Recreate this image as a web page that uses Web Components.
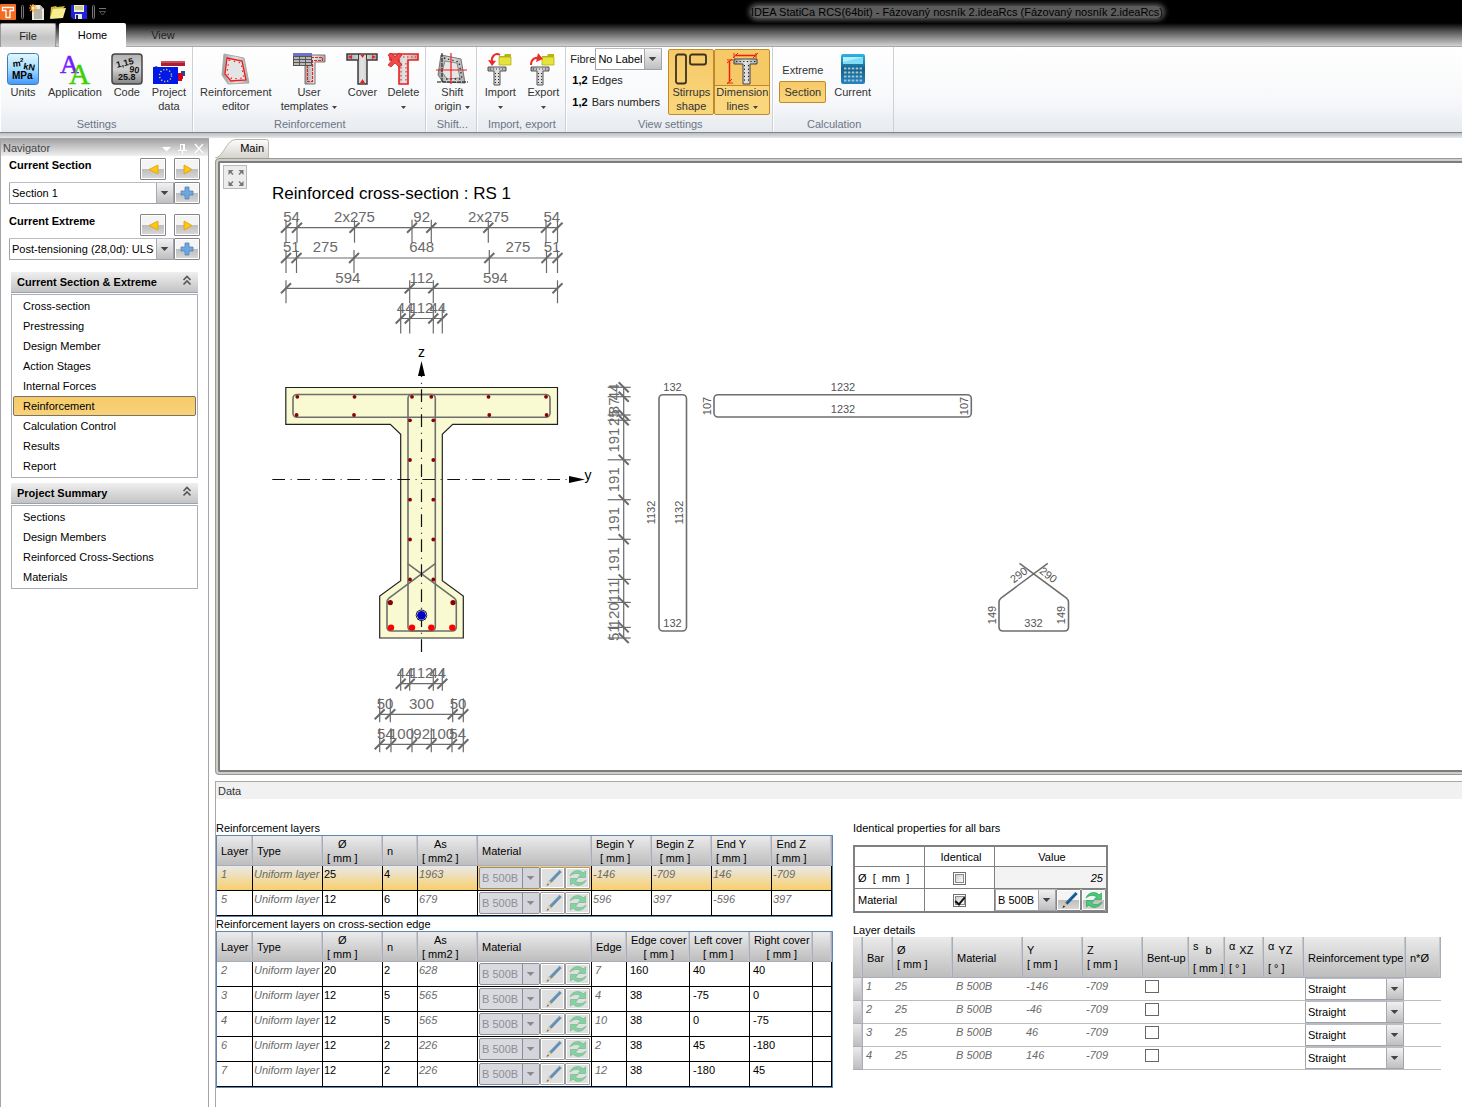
<!DOCTYPE html>
<html lang="en">
<head>
<meta charset="utf-8">
<title>IDEA StatiCa RCS</title>
<style>
  html, body { margin: 0; height: 100%; }
  body { font: 11px/14px "Liberation Sans", Arial, sans-serif; color: #000; background: #fff; overflow-x: hidden; }
</style>
</head>
<body>
<rcs-app></rcs-app>

<script>
/* ---------- shared helpers ---------- */
const define = (name, css, html, setup) => customElements.define(name, class extends HTMLElement {
  connectedCallback() {
    if (this.shadowRoot) return;
    const root = this.attachShadow({ mode: 'open' });
    root.innerHTML = `<style>*{box-sizing:border-box}${css}</style>${typeof html === 'function' ? html(this) : html}`;
    if (setup) setup(this, root);
  }
});

const comboCss = `
  .combo { display: grid; grid-template-columns: 1fr 17px; height: 22px; border: 1px solid #9ea3ad; border-top-color: #b9bcc2; border-radius: 1px; background: #fff; }
  .combo select { grid-area: 1 / 1 / 2 / 3; appearance: none; min-width: 0; width: 100%; height: 20px; margin: 0; padding: 0 19px 0 2px; border: 0; border-radius: 0; background: none; font: inherit; color: #000; opacity: 1; outline: 0; }
  .combo svg { grid-area: 1 / 2; width: 17px; height: 20px; background: linear-gradient(#f1f1f1, #bfbfbf); border-left: 1px solid #a5a9b1; pointer-events: none; }
  .combo.off { background: #d9d9e0; border-color: #8e8e92; border-radius: 2px; }
  .combo.off select { color: #8e8e96; }
  .combo.off svg { background: #d4d4dc; border-color: #8e8e92; }
`;
const comboHtml = (value, attrs = '', off = false) => `
  <span class="combo${off ? ' off' : ''}"><select ${attrs} ${off ? 'disabled' : ''}><option>${value}</option></select>
  <svg viewBox="0 0 17 20" aria-hidden="true"><path d="M4 8h8l-4 4z" fill="${off ? '#8a8a8e' : '#444'}"/></svg></span>`;

/* ---------- icon set ---------- */
const tee = `<linearGradient id="m" x1="0" x2="1"><stop offset="0" stop-color="#9a9a9a"/><stop offset=".5" stop-color="#e4e4e4"/><stop offset="1" stop-color="#a8a8a8"/></linearGradient>`;
const folder = `<path d="M12 3h5l1-2h6v10H12z" fill="#b9b414"/><path d="M12 4h12v8H12z" fill="#e6e33a" stroke="#b4ae1c" stroke-width=".8"/>`;
const ioTee = `<path d="M1 14h18v4h-6v14H7V18H1z" fill="url(#m)" stroke="#555"/><path d="M3 16h14M8.500 20v10M11.500 20v10" stroke="#333" stroke-dasharray="1 2"/>`;
const icons = {
  logo: [16, 16, `<rect width="16" height="16" rx="1" fill="#f26c22"/><path d="M2.500 3.500h11v3H10v7H6v-7H2.500z" fill="none" stroke="#fff" stroke-width="1.300"/>`],
  newdoc: [16, 16, `<path d="M3 1h8l4 4v11H3z" fill="#ece9df"/><path d="M5 6h8M5 8h8M5 10h8M5 12h8M5 14h8" stroke="#77736a" stroke-width=".9"/><path d="M11 1v4h4z" fill="#bbb"/><path d="M4 0v8M0 4h8M1 1l6 6M7 1L1 7" stroke="#ff9d2c" stroke-width="1.200"/><circle cx="4" cy="4" r="1.500" fill="#fff3b0"/>`],
  open: [16, 16, `<path d="M1 3l5-1 1 1 8-1-3 4L3 14H0z" fill="#c9b93c"/><path d="M3 5l13-1-3 10-13 1z" fill="#f7ee92"/>`],
  save: [16, 16, `<path d="M0 1h16v14H2l-2-2z" fill="#1e22e0"/><path d="M3 1h10v7H3z" fill="#eff0c0"/><path d="M4 3h8M4 5h8" stroke="#a3a67a"/><path d="M4 10h7v5H4z" fill="#e8e8e8"/><path d="M5 11h2v4H5z" fill="#1b1b60"/>`],
  units: [32, 32, `<linearGradient id="u" x2="0" y2="1"><stop offset="0" stop-color="#e2f8ff"/><stop offset=".5" stop-color="#a6dcff"/><stop offset="1" stop-color="#3f97ff"/></linearGradient><rect x=".5" y=".5" width="31" height="31" rx="3" fill="url(#u)" stroke="#3f7cae"/><g font-family="Liberation Sans" font-weight="700" fill="#000"><text x="6" y="14" font-size="9" transform="rotate(-6 6 14)">m</text><text x="13" y="9" font-size="6">2</text><text x="16" y="16" font-size="9" transform="rotate(10 16 16)">kN</text><text x="5" y="26" font-size="10">MPa</text></g>`],
  app: [32, 32, `<g font-family="Liberation Serif"><text x="1" y="20" font-size="26" fill="#7320ff" stroke="#7320ff" stroke-width=".5">A</text><text x="10" y="31" font-size="29" fill="#3fd000" stroke="#3fd000" stroke-width=".5">A</text></g>`],
  code: [32, 32, `<linearGradient id="c" x2="0" y2="1"><stop offset="0" stop-color="#b2b2b2"/><stop offset=".5" stop-color="#d0d0d0"/><stop offset="1" stop-color="#858585"/></linearGradient><rect x="1" y="1" width="30" height="30" rx="3" fill="url(#c)" stroke="#444" stroke-width="1.500"/><g font-family="Liberation Sans" font-weight="700" fill="#111"><text x="6" y="15" font-size="9" transform="rotate(-14 6 15)">1,15</text><text x="18" y="19" font-size="9" transform="rotate(8 18 19)">90</text><text x="7" y="27" font-size="9">25.8</text></g>`],
  project: [32, 32, `<path d="M8 8h24v5H8z" fill="#b01e2c"/><path d="M8 8h24v2H8z" fill="#c8505c"/><path d="M20 13h12v3H20z" fill="#fff"/><path d="M28 18h4v5h-4z" fill="#234a90"/><path d="M25 20h4v8h-4zM27 22h3v4h-3z" fill="#d8001c"/><path d="M0 15l3-2 4 2z" fill="#1f3d86"/><path d="M0 14h25v17H0z" fill="#0019e8"/><circle cx="12.500" cy="22.500" r="6" fill="none" stroke="#e2df5c" stroke-width="1.400" stroke-dasharray="1.200 1.940"/>`],
  editor: [32, 32, `${tee}<path d="M4 1l20 4 5 25-21 1-6-9z" fill="url(#m)" stroke="#aaa"/><path d="M7 5l15 3 4 19-15 1-6-7z" fill="#e4e4e4" stroke="#ee1c1c" stroke-width="1.300"/><path d="M9 7l12 3 3 15-12 1-5-6z" fill="none" stroke="#ee1c1c" stroke-width="1.300" stroke-dasharray="1.300 3.700"/>`],
  templates: [32, 32, `${tee}<path d="M11 2h21v7H22v22h-10V9h-1z" fill="url(#m)" stroke="#777"/><path d="M14.500 12v16.500h5V7.500h10v-3h-12" fill="none" stroke="#ee1c1c" stroke-width="1.100" stroke-dasharray="3 1"/><path d="M0 0h19v13H0z" fill="#b9b9b9"/><path d="M0 0h19v3H0z" fill="#6f73c8"/><path d="M.5 3.500h18M.5 6.500h18M.5 9.500h18M.5 12.500h18M.5 3v10M6.500 3v10M12.500 3v10M18.500 3v10" stroke="#555" fill="none"/>`],
  cover: [32, 32, `${tee}<path d="M1 1h30v6H21v24H12V7H1z" fill="url(#m)" stroke="#3c3c3c" stroke-width="1.500"/><path d="M12.500 1v6M20.500 1v6" stroke="#3c3c3c"/><path d="M2 4l4-2v4zM30 4l-4-2v4zM16.500 5l-2-3h4zM16.500 26l-2.500 4h5z" fill="#ee1c1c"/>`],
  delete: [32, 32, `${tee}<path d="M3 1h28v6H21v24H12V7H3z" fill="url(#m)" stroke="#ee1c1c" stroke-width="1.600"/><path d="M14 10v19M19 10v19M16 4h13" stroke="#ee1c1c" stroke-dasharray="1.500 2.500"/><path d="M1 2l3-2 4 4 4-4 3 2-4 5 4 5-3 2-4-4-4 4-3-2 4-5z" fill="#ee4848" stroke="#c41f1f" stroke-width=".7"/>`],
  shift: [32, 32, `${tee}<path d="M5 2l20 4 4 24-22-1-5-7z" fill="url(#m)" stroke="#777"/><path d="M9 8l12 2 3 15-13 1-5-7z" fill="#e6e6e6" stroke="#888"/><path d="M6 0v30M1 29h31" stroke="#111" stroke-dasharray="4 1"/><path d="M8 5l15 4 3 17-16 0" fill="none" stroke="#222" stroke-width="1.300" stroke-dasharray="1.300 3"/><path d="M15 0v31M0 17h31" stroke="#ee1c1c" stroke-width="1.200"/>`],
  import: [26, 32, `${tee}${ioTee}${folder}<path d="M13 2C8-1 4 4 5 9" fill="none" stroke="#ee2a2a" stroke-width="2"/><path d="M1 7l8 1-4 5z" fill="#ee2a2a"/>`],
  export: [26, 32, `${tee}${ioTee}${folder}<path d="M1 12C1 6 5 4 10 5" fill="none" stroke="#ee2a2a" stroke-width="2"/><path d="M8 0l5 6-7 3z" fill="#ee2a2a"/>`],
  stirrups: [32, 32, `<rect x="1" y="1.500" width="10" height="29" rx="2" fill="none" stroke="#3a3222" stroke-width="1.800"/><rect x="15" y="1.500" width="16" height="10" rx="2" fill="none" stroke="#3a3222" stroke-width="1.800"/>`],
  dimension: [32, 32, `${tee}<path d="M8 6h23v5h-7v20h-7V11H8z" fill="url(#m)" stroke="#444"/><path d="M10 8.500h20M18.500 12v17M22.500 12v17" stroke="#222" stroke-dasharray="1.300 2.300"/><path d="M9 2.500h21M3.500 8v21" stroke="#ee2010" stroke-width="1.500"/><path d="M7 5l5-5M27 5l5-5M1 10l5-4M1 31l5-5M8 0v5M30 0v5M1 7h6M1 30h6" stroke="#ee2010"/>`],
  calc: [26, 32, `<linearGradient id="k" x2="0" y2="1"><stop offset="0" stop-color="#2fb4e8"/><stop offset=".5" stop-color="#14628c"/><stop offset="1" stop-color="#2285c4"/></linearGradient><rect x="1" y="1" width="24" height="30" rx="2" fill="url(#k)"/><path d="M3 4h20v7H3z" fill="#7fdcf6"/><path d="M3 4h20l-20 5z" fill="#b4f0fc"/><path d="M4 15.500h18M4 19.500h18M4 23.500h18M4 27.500h18" stroke="#a8c4d2" stroke-width="2" stroke-dasharray="2.500 1.400"/>`],
  prev: [24, 20, `<path d="M17 6v9l-9-4.500z" fill="#ffc80a" stroke="#d99c10" stroke-width=".8"/>`],
  next: [24, 20, `<path d="M9 6v9l8-4.500z" fill="#ffc80a" stroke="#d99c10" stroke-width=".8"/>`],
  plus: [24, 20, `<path d="M10 4h4v4h4v4h-4v4h-4v-4H6V8h4z" fill="#6da7e0" stroke="#5a83b4" stroke-width=".8"/>`],
  pencil: [22, 20, `<path d="M18.500 3L8 14" stroke="#14568c" stroke-width="3.200"/><path d="M17.500 2.500L7.500 13" stroke="#3a8cc8" stroke-width="1"/><path d="M6.500 12l3.500 3-5.500 3z" fill="#e0c080"/><path d="M4.500 18l1-2.500 1.700 1.200z" fill="#222"/>`],
  refresh: [22, 20, `<path d="M3 8C5 2 13 1 16 5l2.500-2v6.500H11L13.500 7C11 4.500 6 5 3 8z" fill="#4cc878" stroke="#2aa45a" stroke-width=".7"/><path d="M19 12c-2 6-10 7-13 3l-2.500 2v-6.500H11L8.500 13c2.500 2.500 7.500 2 10.500-1z" fill="#4cc878" stroke="#2aa45a" stroke-width=".7"/>`],
  expand: [24, 24, `<g fill="#777" stroke="#777"><path d="M4.500 4h5l-5 5zM19.500 4v5l-5-5zM4.500 20v-5l5 5zM19.500 20h-5l5-5z" stroke="none"/><path d="M6 5.500l3 3M18 5.500l-3 3M6 18.500l3-3M18 18.500l-3-3" stroke-width="1.500"/></g>`],
  chevrons: [10, 11, `<path d="M1.500 5L5 1.500 8.500 5M1.500 9.500L5 6l3.500 3.500" fill="none" stroke="#555" stroke-width="1.600"/>`],
  pin: [9, 11, `<path d="M2.500 1v6M6.500 1v6M2 1.500h5M0 7.500h9M4.500 8v3M5.500 1v6" stroke="#fff" fill="none"/>`],
  close: [10, 11, `<path d="M1 1l8 9M9 1L1 10" stroke="#fff" stroke-width="1.300"/>`],
  menu: [9, 11, `<path d="M0 4h9L4.500 8.500z" fill="#fff"/>`],
  more: [7, 8, `<path d="M0 .5h7" stroke="#777"/><path d="M.5 3.500h6L3.500 7z" fill="none" stroke="#555"/>`],
  grip: [3, 14, `<rect x=".5" y=".5" width="2" height="13" rx="1" fill="#111" stroke="#777"/>`]
};
define('ui-icon', ':host{display:block;flex:none}svg{display:block;overflow:visible}', el => {
  const [w, h, body] = icons[el.getAttribute('name')];
  return `<svg width="${w}" height="${h}" viewBox="0 0 ${w} ${h}" aria-hidden="true">${body}</svg>`;
});

/* ---------- small controls ---------- */
define('ui-combo', `:host{display:block}label{display:flex;align-items:center}.combo{flex:1;min-width:0}${comboCss}`,
  el => `<label><slot></slot>${comboHtml(el.getAttribute('value'), `aria-label="${el.getAttribute('name')}"`, el.hasAttribute('disabled'))}</label>`);

define('tool-button', `
  :host { display: block; }
  button { display: flex; align-items: center; justify-content: center; width: 100%; height: 22px; padding: 0; border: 1px solid #85858a; border-radius: 1px; box-shadow: inset 0 0 0 1px #fff; background: linear-gradient(#f4f4f4 50%, #bdbdbd 50%, #d9d9d9); }
  :host([disabled]) button { background: #e0e0e0; border-color: #9c9c9c; }
  :host([disabled]) ui-icon { opacity: .6; }`,
  el => `<button type="button" aria-label="${el.getAttribute('label')}" ${el.hasAttribute('disabled') ? 'disabled' : ''}><ui-icon name="${el.getAttribute('icon')}"></ui-icon></button>`);

/* ---------- title bar and tabs ---------- */
define('title-bar', `
  :host { display: flex; align-items: center; height: 23px; background: #000; }
  .quick { display: flex; align-items: center; gap: 5px; }
  .title { flex: 1; padding-left: 346px; text-align: center; white-space: nowrap; color: #000; }
  .title span { border-radius: 6px; background: #5c5c5c; box-shadow: 0 0 5px 2px #5c5c5c; }
  ui-icon[name=more] { margin-left: -1px; }`,
  `<span class="quick"><ui-icon name="logo"></ui-icon><ui-icon name="grip"></ui-icon><ui-icon name="newdoc"></ui-icon><ui-icon name="open"></ui-icon><ui-icon name="save"></ui-icon><ui-icon name="grip"></ui-icon><ui-icon name="more"></ui-icon></span>
   <span class="title"><span><slot></slot></span></span>`);

define('ribbon-tabs', `
  :host { display: flex; height: 24px; gap: 3px; background: linear-gradient(#000, #555 35%, #cfcfcf 95%, #a9a9ad 96%); }
  button { border: 0; padding: 0; font: inherit; background: none; color: #222; }
  .file { width: 56px; border: 1px solid #999; border-bottom: 0; border-radius: 2px 2px 0 0; background: linear-gradient(#e9e9e9, #c3c3c3 60%, #d2d2d2); }
  .on { width: 67px; background: #fff; border-radius: 2px 2px 0 0; color: #000; }
  .view { width: 68px; }`,
  `<button type="button" class="file">File</button><button type="button" class="on">Home</button><button type="button" class="view">View</button>`);

/* ---------- ribbon ---------- */
define('ribbon-button', `
  :host { display: block; }
  button { display: flex; flex-direction: column; align-items: center; height: 66px; min-width: 40px; padding: 3px; border: 1px solid transparent; border-radius: 2px; background: none; font: inherit; color: #333; text-align: center; white-space: nowrap; }
  ui-icon { height: 32px; }
  svg { vertical-align: 1px; margin-left: 1px; }
  :host([pressed]) button { border-color: #c08a2c; background: linear-gradient(#f6c967, #fad77c); padding: 3px 1px; min-width: 46px; }
  :host([pressed][split]) button { background: linear-gradient(#f6c967 0 35px, #c08a2c 35px 36px, #fad77c 36px); }`,
  el => {
    const arrow = '<svg width="5" height="3" viewBox="0 0 5 3"><path d="M0 0h5L2.500 3z" fill="#444"/></svg>';
    const l2 = el.getAttribute('line2') || '';
    return `<button type="button"><ui-icon name="${el.getAttribute('icon')}"></ui-icon><span>${el.getAttribute('label')}</span><span>${l2}${el.hasAttribute('menu') ? ' ' + arrow : ''}</span></button>`;
  });

define('ribbon-group', `
  :host { display: flex; flex-direction: column; padding: 2px 2px 0 3px; border-right: 1px solid #cdd1d7; box-shadow: inset 1px 0 #fff; }
  :host([wide]) { padding-left: 4px; }
  .row { display: flex; height: 66px; }
  .name { padding-top: 2px; height: 17px; text-align: center; color: #6c7486; white-space: nowrap; }`,
  el => `<div class="row"><slot></slot></div><div class="name">${el.getAttribute('name')}</div>`,
  (el, root) => { root.querySelector('.row').style.gap = (el.getAttribute('gap') || 1) + 'px'; });

define('label-options', `
  :host { display: block; width: 98px; color: #222; }
  ui-combo { width: 92px; margin: -1px 0 3px; }
  button { display: flex; gap: 4px; align-items: center; height: 14px; margin: 0 0 8px; padding: 0 0 0 2px; border: 0; background: none; font: inherit; color: inherit; white-space: nowrap; }
  b { color: #000; }`,
  `<ui-combo name="Fibre label" value="No Label">Fibre</ui-combo><button type="button"><b>1,2</b> Edges</button><button type="button"><b>1,2</b> Bars numbers</button>`);

define('extreme-toggle', `
  :host { display: block; width: 47px; margin: 0 2px; padding-top: 10px; }
  button { display: block; width: 47px; height: 22px; padding: 0; border: 1px solid transparent; border-radius: 2px; background: none; font: inherit; color: #333; }
  .on { border-color: #c08a2c; background: linear-gradient(#f6c967, #fad77c); }`,
  `<button type="button">Extreme</button><button type="button" class="on" aria-pressed="true">Section</button>`);

define('app-ribbon', `
  :host { display: flex; height: 91px; padding-bottom: 6px; background: linear-gradient(#7f858a 0 1px, #b9bdc1 1px, #e6e8ea 6px) 0 100% / 100% 6px no-repeat, linear-gradient(#fff, #f7f8fa 60%, #e3e7ec); }`,
  `<ribbon-group name="Settings">
     <ribbon-button icon="units" label="Units"></ribbon-button>
     <ribbon-button icon="app" label="Application"></ribbon-button>
     <ribbon-button icon="code" label="Code"></ribbon-button>
     <ribbon-button icon="project" label="Project" line2="data"></ribbon-button>
   </ribbon-group>
   <ribbon-group name="Reinforcement">
     <ribbon-button icon="editor" label="Reinforcement" line2="editor"></ribbon-button>
     <ribbon-button icon="templates" label="User" line2="templates" menu></ribbon-button>
     <ribbon-button icon="cover" label="Cover"></ribbon-button>
     <ribbon-button icon="delete" label="Delete" menu></ribbon-button>
   </ribbon-group>
   <ribbon-group name="Shift..." wide><ribbon-button icon="shift" label="Shift" line2="origin" menu></ribbon-button></ribbon-group>
   <ribbon-group name="Import, export" gap="3">
     <ribbon-button icon="import" label="Import" menu></ribbon-button>
     <ribbon-button icon="export" label="Export" menu></ribbon-button>
   </ribbon-group>
   <ribbon-group name="View settings" gap="0" wide>
     <label-options></label-options>
     <ribbon-button icon="stirrups" label="Stirrups" line2="shape" pressed></ribbon-button>
     <ribbon-button icon="dimension" label="Dimension" line2="lines" menu pressed split></ribbon-button>
   </ribbon-group>
   <ribbon-group name="Calculation" gap="2" wide>
     <extreme-toggle></extreme-toggle>
     <ribbon-button icon="calc" label="Current"></ribbon-button>
     <span style="width:14px"></span>
   </ribbon-group>`);

/* ---------- navigator ---------- */
define('nav-picker', `
  :host { display: block; padding: 2px 8px 8px 8px; }
  .row { display: flex; align-items: flex-start; }
  .row + .row { margin-top: 2px; }
  label { flex: 1; font-weight: 700; line-height: 14px; }
  tool-button { width: 26px; }
  .gap { margin-left: 8px; }
  .combo { flex: 1; min-width: 0; }
  ${comboCss}`,
  el => `<div class="row"><label for="s">${el.getAttribute('name')}</label><tool-button icon="prev" label="Previous"></tool-button><tool-button class="gap" icon="next" label="Next"></tool-button></div>
         <div class="row">${comboHtml(el.getAttribute('value'), 'id="s"')}<tool-button icon="plus" label="Add"></tool-button></div>`);

define('nav-list', `
  :host { display: block; margin: 0 10px 5px 10px; }
  h2 { display: flex; align-items: center; justify-content: space-between; height: 21px; margin: 0 0 1px; padding: 0 6px 0 6px; font: inherit; font-weight: 700; border-bottom: 1px solid #9ba3b0; background: linear-gradient(#efefef, #c3c3c3); }
  h2 ui-icon { margin-top: -4px; }
  ul { margin: 0; padding: 1px; list-style: none; border: 1px solid #a9aeb8; }
  a { display: block; height: 20px; padding: 2px 9px; border: 1px solid transparent; border-radius: 2px; color: #000; text-decoration: none; }
  a.on { border-color: #7b7460; background: linear-gradient(#f5ca69, #f8d27a); }`,
  el => `<h2>${el.getAttribute('name')}<ui-icon name="chevrons"></ui-icon></h2><ul>${el.getAttribute('items').split('|').map(t =>
    `<li><a href="#" ${t === el.getAttribute('current') ? 'class="on" aria-current="page"' : ''}>${t}</a></li>`).join('')}</ul>`);

define('nav-panel', `
  :host { display: block; flex: none; width: 209px; border: 1px solid #a5a5a8; border-bottom: 0; }
  header { display: flex; align-items: center; gap: 7px; height: 17px; padding: 1px 4px 0 2px; color: #444; background: linear-gradient(#a3a3a6, #f0f0f0); }
  header span { flex: 1; }
  nav { padding-top: 4px; }`,
  `<header><span>Navigator</span><ui-icon name="menu"></ui-icon><ui-icon name="pin"></ui-icon><ui-icon name="close"></ui-icon></header>
   <nav-picker name="Current Section" value="Section 1"></nav-picker>
   <nav-picker name="Current Extreme" value="Post-tensioning (28,0d): ULS("></nav-picker>
   <nav>
     <nav-list name="Current Section &amp; Extreme" current="Reinforcement" items="Cross-section|Prestressing|Design Member|Action Stages|Internal Forces|Reinforcement|Calculation Control|Results|Report"></nav-list>
     <nav-list name="Project Summary" items="Sections|Design Members|Reinforced Cross-Sections|Materials"></nav-list>
   </nav>`);

/* ---------- cross-section drawing ---------- */
const hDim = (y, up, down, xs, labels) => {
  let s = `<path d="M${xs[0]} ${y}H${xs[xs.length - 1]}" stroke-width="1.200"/>`;
  xs.forEach(x => s += `<path d="M${x} ${y - up}V${y + down}" stroke-width="1.200"/><path d="M${x - 5} ${y + 5}l10-10" stroke-width="2"/>`);
  labels.forEach((t, i) => s += t && `<text x="${(xs[i] + xs[i + 1]) / 2}" y="${y - 5.7}">${t}</text>`);
  return s;
};
const vDim = (x, ys, labels) => {
  let s = `<path d="M${x} ${ys[0]}V${ys[ys.length - 1]}" stroke-width="1.200"/>`;
  ys.forEach(y => s += `<path d="M${x - 16} ${y}h23" stroke-width="1.200"/><path d="M${x - 5} ${y - 5}l10 10" stroke-width="2"/>`);
  labels.forEach((t, i) => s += `<text transform="translate(${x - 5} ${(ys[i] + ys[i + 1]) / 2}) rotate(-90)">${t}</text>`);
  return s;
};
const dots = (list, r, fill) => list.map(([x, y]) => `<circle cx="${x}" cy="${y}" r="${r}" fill="${fill}"/>`).join('');
const note = (x, y, a, t) => `<text transform="translate(${x} ${y}) rotate(${a})">${t}</text>`;
const webBars = [420.3, 460, 499.7, 539.5, 579.5].flatMap(y => [[410, y], [433.3, y]]);
const drawing = `
<svg width="100%" height="607" role="img" aria-label="Reinforced cross-section">
 <g transform="translate(-220 -163)" font-family="Liberation Sans, Arial, sans-serif">
  <text x="272" y="199" font-size="17">Reinforced cross-section : RS 1</text>
  <path d="M285.800 387.500H557.500V424.300H452.700L442.300 434.300V580.700L463.300 596V638H379.700V596L400.700 580.700V434.300L390.300 424.300H285.800Z" fill="#fafad2" stroke="#222" stroke-width="1.200"/>
  <g fill="none" stroke="#6e6e6e" stroke-width="1.600">
   <rect x="293" y="394.500" width="257" height="22.800" rx="4"/>
   <rect x="408" y="394.500" width="27.300" height="236.500" rx="4"/>
   <path d="M435.300 563.700L389 598Q387 600 387 602V627Q387 631 391 631H452Q456.300 631 456.300 627V602Q456.300 600 454.300 598L407.700 563.700"/>
   <rect x="659" y="394.700" width="27.500" height="236.300" rx="4"/>
   <rect x="714" y="394.700" width="257.300" height="22.300" rx="4"/>
   <path d="M1047.800 563.300L1001 598Q999 600 999 602V627Q999 631 1003 631H1064.500Q1068.500 631 1068.500 627V602Q1068.500 600 1066.500 598L1019.500 563.300"/>
  </g>
  <path d="M421.500 652V376" stroke="#111" stroke-width="1.200" stroke-dasharray="12.700 5.600 1 5.700"/>
  <path d="M272.300 479.500H569" stroke="#111" stroke-width="1.200" stroke-dasharray="12.700 5.600 1 5.700"/>
  <path d="M421.500 361l3.500 15h-7zM585 479.500l-16-3.500v7z"/>
  <text x="421.500" y="357" font-size="14" text-anchor="middle">z</text>
  <text x="584.500" y="480" font-size="14">y</text>
  ${dots([[297.3, 396.8], [354.5, 396.8], [412, 396.8], [431.3, 396.8], [488.5, 396.8], [546, 396.8], [296.6, 415], [354, 415], [489.3, 415], [546.6, 415], ...webBars], 1.9, '#8b0000')}
  ${dots([[390.3, 602.6], [453, 602.6]], 2.6, '#8b0000')}
  ${dots([[391, 627.6], [412, 627.6], [431.3, 627.6], [452.3, 627.6]], 3.2, '#ff0000')}
  <circle cx="421.500" cy="615.300" r="5.700"/><circle cx="421.500" cy="615.300" r="4.900" fill="#fff"/><circle cx="421.500" cy="615.300" r="4.400" fill="#0000cd"/>
  <g class="d" stroke="#6a6a6a" fill="none">
   ${hDim(227.7, 8, 15, [286, 297, 354.5, 412, 431.3, 488.3, 546, 557.5], ['54', '', '', '92', '', '', '54'])}
   <text x="354.500" y="222">2x275</text><text x="488.500" y="222">2x275</text>
   ${hDim(258, 8, 15, [286, 296.5, 354, 489.3, 546.5, 557.5], ['51', '275', '648', '275', '51'])}
   ${hDim(288.3, 8, 15, [286, 409.7, 433.3, 557.5], ['594', '112', '594'])}
   ${hDim(318.5, 12, 15, [400.7, 409.7, 433.3, 442.3], ['44', '112', '44'])}
   ${hDim(683.7, 14, 7, [400.7, 409.7, 433.3, 442.3], ['44', '112', '44'])}
   ${hDim(714.3, 16, 8, [379.7, 390.3, 452.7, 463.3], ['50', '300', '50'])}
   ${hDim(744.3, 16, 8, [379.7, 391, 412, 431.3, 452, 463.3], ['54', '100', '92', '100', '54'])}
   ${vDim(623.7, [387.3, 396.7, 415, 420.3, 459.8, 499.7, 539.3, 579.4, 602.4, 627.4, 638], ['44', '87', '25', '191', '191', '191', '191', '111', '120', '51'])}
  </g>
  <g class="n">
   ${note(672.5, 391, 0, '132')}${note(672.5, 627, 0, '132')}${note(655, 512.5, -90, '1132')}${note(682.5, 512.5, -90, '1132')}
   ${note(843, 391, 0, '1232')}${note(843, 413, 0, '1232')}${note(710.5, 406, -90, '107')}${note(967.5, 406, -90, '107')}
   ${note(1033.5, 627, 0, '332')}${note(996, 615, -90, '149')}${note(1065, 615, -90, '149')}${note(1021, 578, -37, '290')}${note(1046, 578, 37, '290')}
  </g>
 </g>
</svg>`;
define('section-canvas', `
  :host { display: block; position: relative; border: solid #d0cdc4; border-width: 3px 0 3px 3px; border-radius: 4px 0 0 4px; outline: 1px solid #9a9a9a; outline-offset: -1px; background: #fff; }
  .in { border: solid #7d7d80; border-width: 2px 0 2px 2px; border-radius: 2px 0 0 2px; overflow: hidden; }
  svg { display: block; }
  .d text { font-size: 15px; text-anchor: middle; fill: #6a6a6a; stroke: none; }
  .n text { font-size: 11px; text-anchor: middle; fill: #555; }
  button { position: absolute; left: 5px; top: 4px; padding: 0; border: 1px solid #b9b9b9; background: #ececec; width: 24px; height: 24px; display: grid; place-items: center; }`,
  `<div class="in">${drawing}</div><button type="button" aria-label="Zoom all"><ui-icon name="expand"></ui-icon></button>`);

define('doc-tab', `
  :host { display: grid; height: 20px; justify-content: start; padding-top: 1px; }
  svg, button { grid-area: 1 / 1; }
  button { border: 0; padding: 0 5px 2px 0; background: none; font: inherit; text-align: right; }`,
  `<svg width="54" height="19" viewBox="0 0 54 19" aria-hidden="true"><linearGradient id="t" x2="0" y2="1"><stop offset="0" stop-color="#fdfdfc"/><stop offset="1" stop-color="#d6d3cb"/></linearGradient><path d="M0 19C9 18 11 .5 21 .5H51.500Q53.500 .5 53.500 2.500V19" fill="url(#t)" stroke="#b9b6ae"/></svg><button type="button">Main</button>`);

/* ---------- data tables ---------- */
const mat = `<td class="m"><div><ui-combo name="Material" value="B 500B" disabled></ui-combo><tool-button icon="pencil" label="Edit material" disabled></tool-button><tool-button icon="refresh" label="Change material" disabled></tool-button></div></td>`;
const head = t => `<th scope="col"><span>${t}</span></th>`;
const mm = t => `${t}<br>[ mm ]`;
const tables = {
  layers: {
    w: [36, 70, 60, 35, 60, 114, 60, 60, 60, 60],
    h: ['Layer', 'Type', mm('Ø'), 'n', 'As<br>[ mm2 ]', 'Material', mm('Begin Y'), mm('Begin Z'), mm('End Y'), mm('End Z')],
    r: [[1, 25, 4, 1963, '-146', '-709', '146', '-709'], [5, 12, 6, 679, '596', '397', '-596', '397']],
    cell: v => `<td class="i">${v}</td>`, on: 0
  },
  edges: {
    w: [36, 70, 60, 35, 60, 114, 35, 63, 60, 63, 19],
    h: ['Layer', 'Type', mm('Ø'), 'n', 'As<br>[ mm2 ]', 'Material', 'Edge', mm('Edge cover'), mm('Left cover'), mm('Right cover'), ''],
    r: [[2, 20, 2, 628, 7, 160, 40, 40, ''], [3, 12, 5, 565, 4, 38, '-75', 0, ''], [4, 12, 5, 565, 10, 38, 0, '-75', ''], [6, 12, 2, 226, 2, 38, 45, '-180', ''], [7, 12, 2, 226, 12, 38, '-180', 45, '']],
    cell: (v, i) => `<td class="${i ? 'p' : 'i p'}">${v}</td>`
  }
};
const headCss = `
  table { border-collapse: separate; border-spacing: 0; table-layout: fixed; }
  th { font-weight: 400; text-align: left; white-space: nowrap; overflow: hidden; background: linear-gradient(#ebebeb, #bdbdbd); border: solid #a8adb8; border-width: 0 1px 1px 0; box-shadow: inset -1px 0 #c4c7ce; }
  th span { display: inline-block; text-align: center; vertical-align: middle; }`;
define('layers-table', `
  :host { display: block; }
  ${headCss}
  table { border: 1px solid #5e86b5; width: 617px; }
  th { height: 30px; padding: 0 0 0 4px; }
  td { height: 25px; padding: 0 0 0 1px; line-height: 16px; vertical-align: top; white-space: nowrap; border: solid #000; border-width: 0 1px 1px 0; }
  td.i { font-style: italic; color: #6a6a6a; }
  td.l { padding-left: 4px; }
  td.p { padding-left: 3px; }
  td.m { padding: 1px 0 0 1px; }
  .m div { display: flex; }
  .m ui-combo { width: 61px; }
  .m tool-button { width: 25px; }
  tr.on td { background: linear-gradient(#e9e9e9, #f8cf6c); }
  tr.on td.m { background: #f8cf6c; }`,
  el => {
    const t = tables[el.getAttribute('kind')];
    return `<table><colgroup>${t.w.map(w => `<col style="width:${w}px">`).join('')}</colgroup><thead><tr>${t.h.map(head).join('')}</tr></thead><tbody>${t.r.map(([id, d, n, as, ...rest], k) =>
      `<tr class="${t.on === k ? 'on' : ''}"><td class="i l">${id}</td><td class="i">Uniform layer</td><td>${d}</td><td>${n}</td><td class="i">${as}</td>${mat}${rest.map(t.cell).join('')}</tr>`).join('')}</tbody></table>`;
  });

define('identical-table', `
  :host { display: block; margin: 10px 0; }
  table { width: 255px; border: 2px solid #808080; border-collapse: separate; border-spacing: 0; table-layout: fixed; background: #fff; }
  th { font-weight: 400; text-align: left; }
  th, td { padding: 0 0 0 3px; height: 22px; border: solid #808080; border-width: 0 1px 1px 0; }
  tr > :last-child { border-right: 0; }
  tbody tr:last-child > * { border-bottom: 0; }
  thead th { height: 20px; text-align: center; }
  td { text-align: center; padding: 0; }
  td.v { text-align: right; font-style: italic; background: #f3f3f3; padding-right: 3px; }
  input { appearance: none; width: 13px; height: 13px; margin: 0; border: 1px solid #707070; background: #fff; padding: 1px; vertical-align: middle; display: inline-grid; place-items: stretch; }
  input::before { content: ""; border: 1px solid #8a8a8a; background: linear-gradient(135deg, #ccc, #fff); }
  input:checked::before { grid-area: 1 / 1; }
  input:checked::after { content: ""; grid-area: 1 / 1; place-self: center; width: 8px; height: 4px; border: solid #111; border-width: 0 0 2px 2px; transform: translateY(-1px) rotate(-50deg); }
  .m div { display: flex; }
  .m ui-combo { width: 61px; }
  .m tool-button { width: 25px; }`,
  `<table><colgroup><col style="width:70px"><col style="width:70px"><col></colgroup>
   <thead><tr><th></th><th scope="col">Identical</th><th scope="col">Value</th></tr></thead>
   <tbody><tr><th scope="row">Ø&nbsp; [&nbsp; mm&nbsp; ]</th><td><input type="checkbox" aria-label="Identical diameter"></td><td class="v">25</td></tr>
   <tr><th scope="row">Material</th><td><input type="checkbox" checked aria-label="Identical material"></td><td class="m"><div><ui-combo name="Material" value="B 500B"></ui-combo><tool-button icon="pencil" label="Edit material"></tool-button><tool-button icon="refresh" label="Change material"></tool-button></div></td></tr></tbody></table>`);

define('bars-table', `
  :host { display: block; }
  ${headCss}
  table { width: 588px; }
  thead th { height: 40px; padding: 0 0 0 4px; }
  th span { text-align: left; }
  th i { font-style: normal; line-height: 0; vertical-align: 4px; padding-right: 4px; }
  thead th.s { padding-top: 4px; }
  th.s span { line-height: 18px; }
  tbody th { padding: 0; }
  td { height: 23px; padding: 0 0 0 2px; line-height: 16px; vertical-align: top; font-style: italic; color: #6a6a6a; border-bottom: 1px solid #bcbcbc; white-space: nowrap; }
  td ui-combo { width: 99px; font-style: normal; margin-left: -1px; height: 22px; }
  input { appearance: none; display: block; width: 14px; height: 13px; margin: 2px 0 0; border: 1px solid #666; background: #fff; }
  td:nth-child(2) { padding-left: 3px; }
  td:nth-child(4), td:nth-child(5), td:nth-child(6) { padding-left: 3px; }`,
  () => `<table><colgroup>${[10, 30, 60, 70, 60, 60, 46, 36, 39, 40, 102, 35].map(w => `<col style="width:${w}px">`).join('')}</colgroup>
   <thead><tr><th></th>${['Bar', mm('Ø'), 'Material', mm('Y'), mm('Z'), 'Bent-up'].map(head).join('')}<th class="s" scope="col"><span><i>s</i> b<br>[ mm ]</span></th><th class="s" scope="col"><span><i>α</i>XZ<br>[ ° ]</span></th><th class="s" scope="col"><span><i>α</i>YZ<br>[ ° ]</span></th>${['Reinforcement type', 'n*Ø'].map(head).join('')}</tr></thead>
   <tbody>${['-146', '-46', '46', '146'].map((y, i) => `<tr><th></th><td>${i + 1}</td><td>25</td><td>B 500B</td><td>${y}</td><td>-709</td><td><input type="checkbox" aria-label="Bent-up bar ${i + 1}"></td><td></td><td></td><td></td><td><ui-combo name="Reinforcement type" value="Straight"></ui-combo></td><td></td></tr>`).join('')}</tbody></table>`);

define('data-panel', `
  :host { display: block; flex: 1; border: solid #a9a9a9; border-width: 1px 0 0 1px; }
  header { height: 17px; padding: 2px; color: #333; background: #f1f1f1; }
  .cols { display: flex; gap: 20px; padding-top: 22px; }
  h3 { margin: 0; font: inherit; height: 14px; }`,
  `<header>Data</header><div class="cols">
    <section><h3>Reinforcement layers</h3><layers-table kind="layers"></layers-table><h3>Reinforcement layers on cross-section edge</h3><layers-table kind="edges"></layers-table></section>
    <section><h3>Identical properties for all bars</h3><identical-table></identical-table><h3>Layer details</h3><bars-table></bars-table></section>
  </div>`);

/* ---------- application shell ---------- */
define('rcs-app', `
  :host { display: flex; flex-direction: column; min-height: 100vh; overflow-x: clip; }
  .body { display: flex; flex: 1; }
  main { flex: 1; min-width: 0; display: flex; flex-direction: column; padding-left: 6px; }
  section-canvas { margin-right: -4px; }
  data-panel { margin-top: 6px; }`,
  `<title-bar>IDEA StatiCa RCS(64bit) - Fázovaný nosník 2.ideaRcs (Fázovaný nosník 2.ideaRcs)</title-bar>
   <ribbon-tabs></ribbon-tabs>
   <app-ribbon></app-ribbon>
   <div class="body"><nav-panel></nav-panel><main><doc-tab></doc-tab><section-canvas></section-canvas><data-panel></data-panel></main></div>`);
</script>
</body>
</html>
